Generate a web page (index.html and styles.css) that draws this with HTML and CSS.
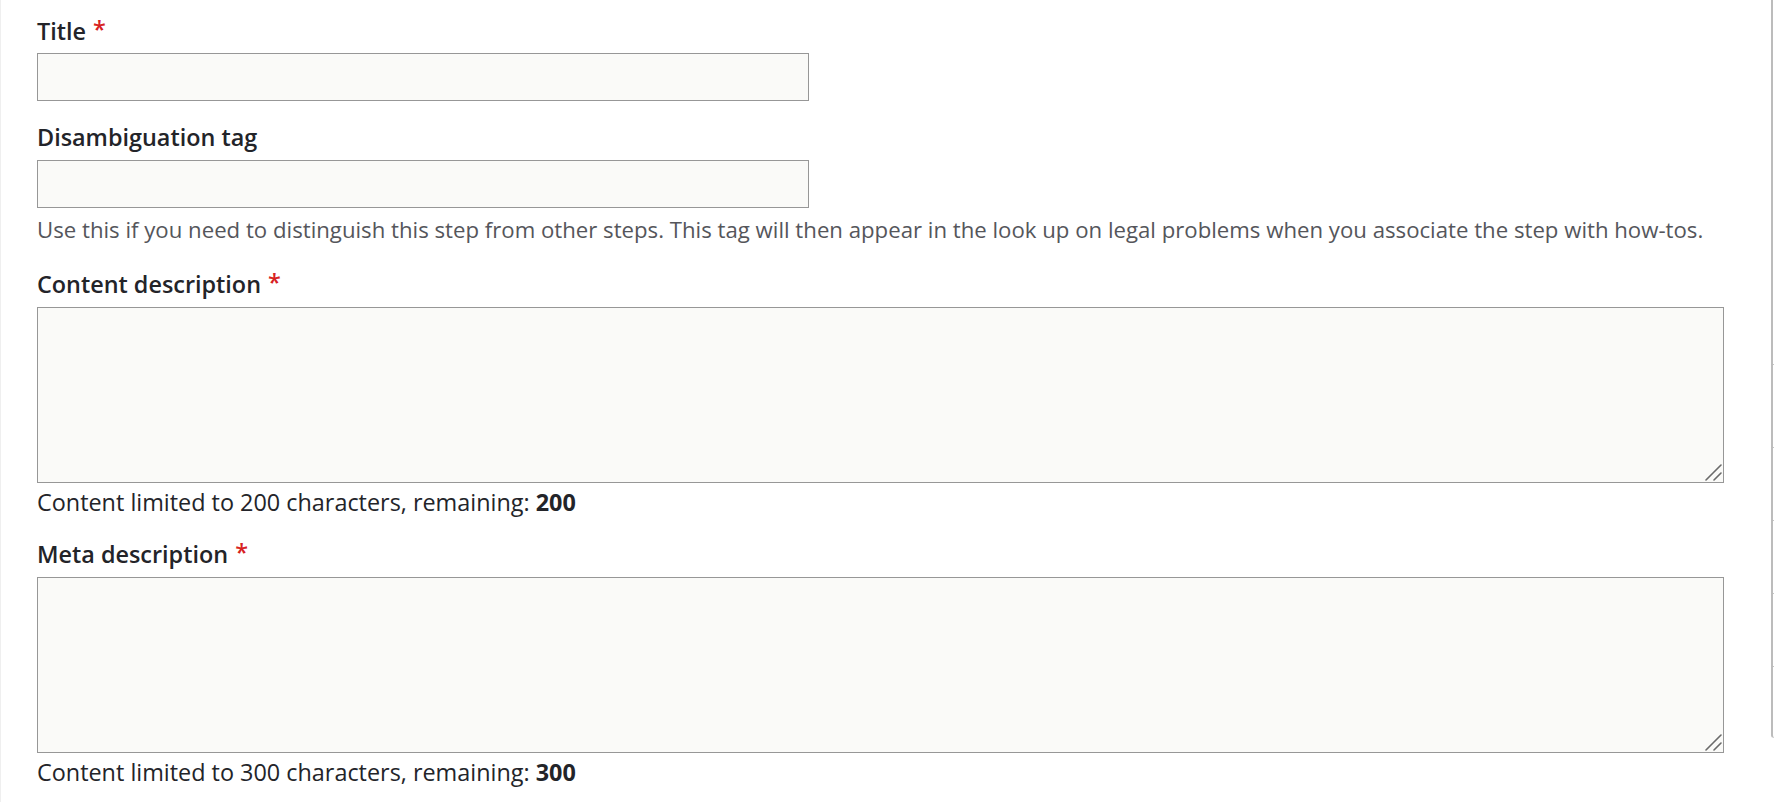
FILE: index.html
```html
<!DOCTYPE html>
<html lang="en">
<head>
<meta charset="utf-8">
<title>Step form</title>
<link rel="stylesheet" href="styles.css">
</head>
<body>
<div class="page">
  <main class="main">
    <div class="field field-title">
      <label class="label" for="title">Title <span class="req">*</span></label>
      <input class="input" id="title" type="text">
    </div>
    <div class="field field-tag">
      <label class="label" for="tag">Disambiguation tag</label>
      <input class="input" id="tag" type="text">
      <div class="help">Use this if you need to distinguish this step from other steps. This tag will then appear in the look up on legal problems when you associate the step with how-tos.</div>
    </div>
    <div class="field field-content">
      <label class="label" for="content">Content description <span class="req">*</span></label>
      <div class="area-wrap">
        <textarea class="area" id="content"></textarea>
        <svg class="grip" width="17" height="17" viewBox="0 0 17 17" aria-hidden="true"><path d="M1 16 L16 1 M9 16 L16 9" stroke="#6a6a6a" stroke-width="1.6" fill="none" stroke-linecap="round"/></svg>
      </div>
      <div class="counter">Content limited to 200 characters, remaining: <strong>200</strong></div>
    </div>
    <div class="field field-meta">
      <label class="label" for="meta">Meta description <span class="req">*</span></label>
      <div class="area-wrap">
        <textarea class="area" id="meta"></textarea>
        <svg class="grip" width="17" height="17" viewBox="0 0 17 17" aria-hidden="true"><path d="M1 16 L16 1 M9 16 L16 9" stroke="#6a6a6a" stroke-width="1.6" fill="none" stroke-linecap="round"/></svg>
      </div>
      <div class="counter">Content limited to 300 characters, remaining: <strong>300</strong></div>
    </div>
  </main>
  <aside class="side">
    <div class="side-item side-first"></div>
    <div class="side-item side-a"></div>
    <div class="side-item side-b"></div>
    <div class="side-item side-b"></div>
    <div class="side-item side-b"></div>
    <div class="side-item side-c"></div>
  </aside>
</div>
</body>
</html>
```

FILE: styles.css
```css
html, body {
  margin: 0;
  padding: 0;
  background: #fff;
}
body {
  font-family: "Open Sans", "Noto Sans", sans-serif;
  color: #232429;
  width: 1774px;
  height: 802px;
  overflow: hidden;
}
.page {
  display: flex;
  align-items: flex-start;
  height: 802px;
}
.main {
  flex: 1;
  min-width: 0;
  padding: 16px 47px 0 36px;
  border-left: 1px solid #efefef;
  height: 786px;
}
.field-title { margin-bottom: 21px; }
.field-tag { margin-bottom: 25px; }
.field-content { margin-bottom: 22px; }
.label {
  display: block;
  font-size: 23.4px;
  font-weight: 600;
  line-height: 30px;
  margin-bottom: 8px;
  color: #232429;
}
.field-title .label { margin-bottom: 7px; }
.req {
  color: #d72222;
  font-weight: 600;
  position: relative;
  top: -2px;
  margin-left: 1px;
}
.input {
  display: block;
  box-sizing: border-box;
  width: 772px;
  height: 48px;
  margin: 0;
  border: 1px solid #979797;
  background: #fafaf8;
  border-radius: 0;
  font: inherit;
  outline: none;
}
.area-wrap {
  position: relative;
}
.area {
  display: block;
  box-sizing: border-box;
  width: 100%;
  height: 176px;
  margin: 0;
  border: 1px solid #979797;
  background: #fafaf8;
  border-radius: 0;
  font: inherit;
  resize: none;
  outline: none;
}
.grip {
  position: absolute;
  right: 2px;
  bottom: 2px;
  display: block;
}
.help {
  font-size: 22.2px;
  line-height: 28px;
  margin-top: 8px;
  color: #55565b;
}
.counter {
  font-size: 23.4px;
  line-height: 30px;
  margin-top: 4px;
  color: #232429;
}
.counter strong { font-weight: 700; }
.side {
  flex: 0 0 1px;
  width: 1px;
  height: 737px;
  border-left: 2px solid #bcbcbc;
  border-bottom: 1px solid #cfcfcf;
  border-bottom-left-radius: 5px;
  display: flex;
  flex-direction: column;
}
.side-item { border-top: 1px solid #c4c4c4; }
.side-first { height: 364px; border-top: none; }
.side-a { height: 82px; }
.side-b { height: 72px; }
.side-c { flex: 1; }
```
